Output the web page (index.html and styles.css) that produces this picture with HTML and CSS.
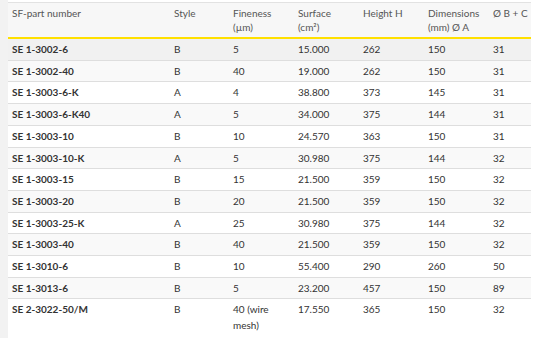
FILE: index.html
```html
<!DOCTYPE html>
<html lang="en">

<head>
    <meta charset="UTF-8">
    <meta name="viewport" content="width=device-width, initial-scale=1.0">
    <title>SF-part numbers</title>
    <link rel="stylesheet" href="styles.css">
</head>

<body>
    <div class="page">
        <table class="parts">
            <colgroup>
                <col class="c-part">
                <col class="c-style">
                <col class="c-num">
                <col class="c-num">
                <col class="c-num">
                <col class="c-num">
                <col class="c-last">
            </colgroup>
            <thead>
                <tr>
                    <th>SF-part number</th>
                    <th>Style</th>
                    <th>Fineness<br>(µm)</th>
                    <th>Surface<br>(cm²)</th>
                    <th>Height H</th>
                    <th>Dimensions<br>(mm) Ø A</th>
                    <th class="nowrap">Ø B + C</th>
                </tr>
            </thead>
            <tbody>
                <tr class="hover"><td>SE 1-3002-6</td><td>B</td><td>5</td><td>15.000</td><td>262</td><td>150</td><td>31</td></tr>
                <tr><td>SE 1-3002-40</td><td>B</td><td>40</td><td>19.000</td><td>262</td><td>150</td><td>31</td></tr>
                <tr><td>SE 1-3003-6-K</td><td>A</td><td>4</td><td>38.800</td><td>373</td><td>145</td><td>31</td></tr>
                <tr><td>SE 1-3003-6-K40</td><td>A</td><td>5</td><td>34.000</td><td>375</td><td>144</td><td>31</td></tr>
                <tr><td>SE 1-3003-10</td><td>B</td><td>10</td><td>24.570</td><td>363</td><td>150</td><td>31</td></tr>
                <tr><td>SE 1-3003-10-K</td><td>A</td><td>5</td><td>30.980</td><td>375</td><td>144</td><td>32</td></tr>
                <tr><td>SE 1-3003-15</td><td>B</td><td>15</td><td>21.500</td><td>359</td><td>150</td><td>32</td></tr>
                <tr><td>SE 1-3003-20</td><td>B</td><td>20</td><td>21.500</td><td>359</td><td>150</td><td>32</td></tr>
                <tr><td>SE 1-3003-25-K</td><td>A</td><td>25</td><td>30.980</td><td>375</td><td>144</td><td>32</td></tr>
                <tr><td>SE 1-3003-40</td><td>B</td><td>40</td><td>21.500</td><td>359</td><td>150</td><td>32</td></tr>
                <tr><td>SE 1-3010-6</td><td>B</td><td>10</td><td>55.400</td><td>290</td><td>260</td><td>50</td></tr>
                <tr><td>SE 1-3013-6</td><td>B</td><td>5</td><td>23.200</td><td>457</td><td>150</td><td>89</td></tr>
                <tr class="last"><td>SE 2-3022-50/M</td><td>B</td><td>40 (wire mesh)</td><td>17.550</td><td>365</td><td>150</td><td>32</td></tr>
            </tbody>
        </table>
    </div>
</body>

</html>
```

FILE: styles.css
```css
body {
    font-family: Lato, 'Liberation Sans', sans-serif;
    margin: 0;
    padding: 0;
    background: #fff;
}

.page {
    border-left: 8px solid #f2f2f2;
    min-height: 100vh;
    padding-top: 2px;
    box-sizing: border-box;
}

.parts {
    width: 523px;
    border-collapse: collapse;
    table-layout: fixed;
    font-size: 10px;
    color: #333;
}

.c-part { width: 162px; }
.c-style { width: 59px; }
.c-num { width: 65px; }
.c-last { width: 42px; }

.parts th {
    background: #f7f7f7;
    border-top: 1px solid #e2e2e2;
    border-bottom: 2px solid #ffe000;
    color: #555;
    font-weight: normal;
    text-align: left;
    vertical-align: top;
    line-height: 13.5px;
    padding: 4px 4px 3px;
}

.parts th.nowrap {
    white-space: nowrap;
}

.parts td {
    padding: 3px 4px;
    line-height: 14.7px;
    border-bottom: 1px solid #dedede;
    vertical-align: top;
}

.parts td:first-child {
    font-weight: bold;
    color: #333;
}

.parts tbody tr:nth-child(even) {
    background: #f9f9f9;
}

.parts tbody tr.hover {
    background: #f1f1f1;
}

.parts tr.last td {
    border-bottom: none;
    line-height: 15.4px;
}
```
